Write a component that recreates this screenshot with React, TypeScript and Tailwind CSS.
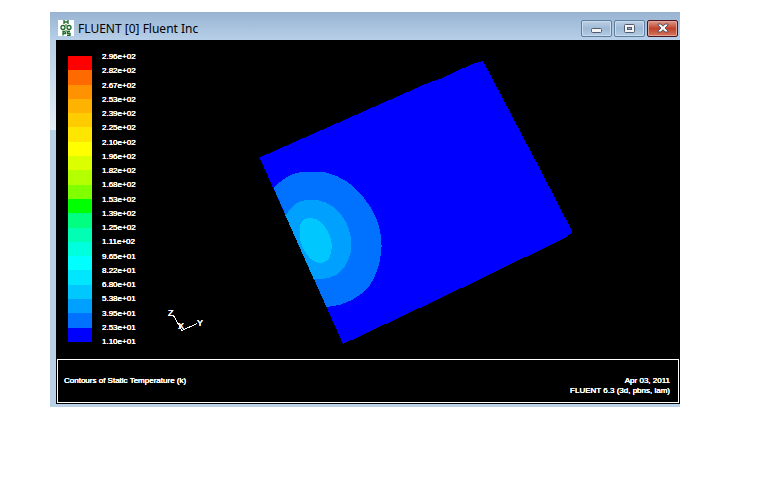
import type { ReactNode } from "react";

const bands = [
  "bg-[#ff0000]", "bg-[#ff6a00]", "bg-[#ff9200]", "bg-[#ffb200]", "bg-[#ffcc00]",
  "bg-[#ffe600]", "bg-[#ffff00]", "bg-[#dcff00]", "bg-[#b4ff00]", "bg-[#80ff00]",
  "bg-[#00ff00]", "bg-[#00ff80]", "bg-[#00ffb4]", "bg-[#00ffdc]", "bg-[#00ffff]",
  "bg-[#00e6ff]", "bg-[#00c8ff]", "bg-[#00a0ff]", "bg-[#0072ff]", "bg-[#0000ff]",
];

const levels = [
  "2.96e+02", "2.82e+02", "2.67e+02", "2.53e+02", "2.39e+02", "2.25e+02", "2.10e+02",
  "1.96e+02", "1.82e+02", "1.68e+02", "1.53e+02", "1.39e+02", "1.25e+02", "1.11e+02",
  "9.65e+01", "8.22e+01", "6.80e+01", "5.38e+01", "3.95e+01", "2.53e+01", "1.10e+01",
];

function AppIcon() {
  return (
    <svg viewBox="0 0 16 16" className="h-4 w-4 shrink-0" aria-hidden="true">
      <rect width="16" height="16" fill="#fff" />
      <g fill="none" stroke="#1d6b2c" strokeWidth="1.3">
        <path d="M6 0v4M10 0v4M6 2h4" />
        <circle cx="5" cy="7.500" r="2" />
        <circle cx="11" cy="7.500" r="2" />
        <path d="M5 15.500v-4h2.500v2H5M12 11.500H9.500v2H12v2H9" />
      </g>
      <path d="M7 4h2v2H7zM7 10h2v2H7z" fill="#8fae7f" />
    </svg>
  );
}

function CaptionButton({ label, close, children }: { label: string; close?: boolean; children: ReactNode }) {
  const tone = close
    ? "border-[#4a1420] bg-linear-to-b from-[#dc9a8b] via-[#c0402a] to-[#d5765c] shadow-[inset_0_0_0_1px_#e0a596]"
    : "border-[#5f7d9d] bg-linear-to-b from-[#bdd0e4] via-[#9db9d5] to-[#b3cce5] shadow-[inset_0_0_0_1px_#c9dbec]";
  return (
    <button type="button" aria-label={label} className={`flex h-[17px] w-[31px] items-center justify-center rounded-xs border ${tone}`}>
      {children}
    </button>
  );
}

function TitleBar() {
  return (
    <header className="flex h-7 items-center bg-linear-to-b from-[#98b4d2] to-[#b7cfe8] pt-1 pr-0.5 pl-2">
      <AppIcon />
      <h1 className="ml-1 flex-1 pt-0.5 font-['Noto_Sans',sans-serif] text-[12px] leading-4 text-black">FLUENT [0] Fluent Inc</h1>
      <div className="flex gap-0.5">
        <CaptionButton label="Minimize">
          <svg viewBox="0 0 12 12" className="h-3 w-3" aria-hidden="true">
            <rect x="0.500" y="6.500" width="10" height="4" rx="1" fill="#f4f4f4" stroke="#525b6b" />
          </svg>
        </CaptionButton>
        <CaptionButton label="Maximize">
          <svg viewBox="0 0 12 12" className="h-3 w-3" aria-hidden="true">
            <rect x="0.500" y="2.500" width="10" height="8" rx="1" fill="#f4f4f4" stroke="#525b6b" />
            <rect x="3.500" y="5.500" width="4" height="2" fill="#8fb0d0" stroke="#525b6b" />
          </svg>
        </CaptionButton>
        <CaptionButton label="Close" close>
          <svg viewBox="0 0 12 10" className="h-2.5 w-3" aria-hidden="true">
            <path d="M1 1h3l2 2.200L8 1h3v1L8 5l3 3v1H8L6 6.800 4 9H1V8l3-3-3-3z" fill="#f6f6f6" stroke="#565261" />
          </svg>
        </CaptionButton>
      </div>
    </header>
  );
}

function Legend() {
  return (
    <div className="flex w-[83px] shrink-0 pl-[11px]">
      <div className="mt-4 flex h-[286px] w-6 flex-col">
        {bands.map((c) => (
          <div key={c} className={`flex-1 ${c}`} />
        ))}
      </div>
      <ol className="mt-3 ml-2.5 flex h-[295px] flex-col justify-between">
        {levels.map((v) => (
          <li key={v} className="h-2.5 leading-[10px]">{v}</li>
        ))}
      </ol>
    </div>
  );
}

function ContourPlot() {
  return (
    <svg
      viewBox="140 40 539 319"
      preserveAspectRatio="xMinYMin meet"
      className="h-[319px] min-w-0 flex-1"
      role="img"
      aria-label="Contours of static temperature"
    >
      <g shapeRendering="crispEdges">
        <path d="M259.500 157.500L386 101.500 430 82 440 79 472 64 483 61 541 171 572.500 232 565 238 540 250 445 296 343 344z" fill="#0000ff" />
        <path d="M273.500 188C281 180 291 173 301 172H325C341 176 352 184 361 194C376 212 382 228 381.500 247C381 262 376 276 370 285C360 297 346 306 326.500 307z" fill="#0072ff" />
        <path d="M285.500 215.500C291 206 299 200 306 200H317C329 202 339 209 346 222C350 230 351.500 238 351.500 248C350 260 344 270 336 275C329 279 321 280 313.500 278.500z" fill="#00a0ff" />
        <path d="M299.500 226C301 220 305 218 311 218C319 218 326 226 330 236C332.500 243 332.500 251 329 258C326 263 320 264 316 262C308 259 302 249 300 240z" fill="#00c8ff" />
      </g>
      <path d="M173.500 315.500L182 330.500 197 323.500M182 330.500L179 325" stroke="#fff" fill="none" shapeRendering="crispEdges" />
      <g fill="#fff" className="text-[9px]">
        <text x="168" y="316">Z</text>
        <text x="178" y="329">X</text>
        <text x="197" y="326">Y</text>
      </g>
    </svg>
  );
}

export default function App() {
  return (
    <main className="bg-white pt-3 pr-[88px] pb-4 pl-[50px]">
      <section className="bg-[#b9d0e9]">
        <TitleBar />
        <div className="flex pb-[3px]">
          <div className="w-1.5 shrink-0">
            <div className="h-[90px] bg-linear-to-b from-[#b7cfe8] to-[#e2edf7]" />
          </div>
          <div className="min-w-0 flex-1 bg-black p-px pt-0 font-['Liberation_Sans',Arial,sans-serif] text-[8px] text-white [text-shadow:0_0_0_#fff,0_0_0_#fff]">
            <div className="flex">
              <Legend />
              <ContourPlot />
            </div>
            <footer className="flex justify-between border border-white pt-4 pr-2 pb-1.5 pl-1.5 leading-[10px]">
              <p>Contours of Static Temperature (k)</p>
              <div className="text-right">
                <p>Apr 03, 2011</p>
                <p>FLUENT 6.3 (3d, pbns, lam)</p>
              </div>
            </footer>
          </div>
        </div>
      </section>
    </main>
  );
}
